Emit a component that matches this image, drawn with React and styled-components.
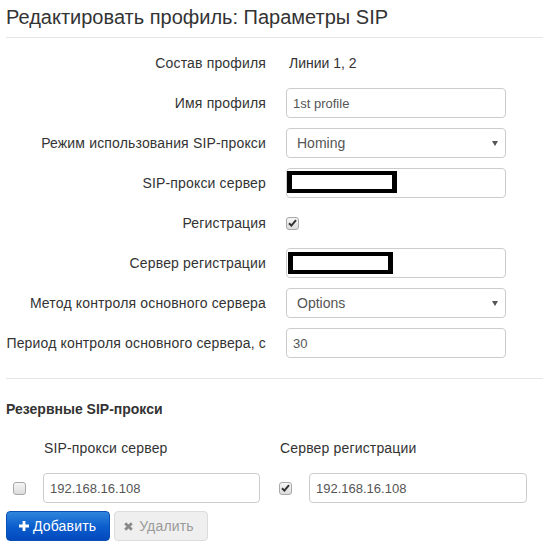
import React from "react";
import styled, { createGlobalStyle } from "styled-components";

const GlobalStyle = createGlobalStyle`
  body {
    margin: 0;
    background: #fff;
    font-family: "Liberation Sans", Arial, sans-serif;
    color: #333;
  }
`;

const Page = styled.div`
  padding: 6px 0 0 6px;
  width: 537px;
`;

const Title = styled.h3`
  margin: 0;
  font-size: 20px;
  line-height: 22px;
  font-weight: normal;
  color: #333;
`;

const Divider = styled.hr`
  margin: ${(p) => p.$top || 0}px 0 0 0;
  border: 0;
  border-top: 1px solid #e5e5e5;
  height: 0;
`;

const Form = styled.div`
  display: grid;
  grid-template-columns: 260px 220px;
  grid-auto-rows: 30px;
  column-gap: 20px;
  row-gap: 10px;
  margin-top: 10px;
`;

const Label = styled.div`
  align-self: center;
  text-align: right;
  font-size: 14px;
  letter-spacing: 0.16px;
  white-space: nowrap;
`;

const Static = styled.div`
  align-self: center;
  padding-left: 3px;
  font-size: 14px;
`;

const FieldWrap = styled.div`
  position: relative;
  display: flex;
  align-items: center;
`;

const Input = styled.input`
  box-sizing: border-box;
  width: 100%;
  height: 30px;
  padding: 0 6px;
  border: 1px solid #ccc;
  border-radius: 4px;
  font-family: inherit;
  font-size: 13px;
  color: #555;
  background: #fff;
  outline: none;
`;

const Select = styled.select`
  box-sizing: border-box;
  width: 100%;
  height: 30px;
  padding: 0 10px;
  border: 1px solid #ccc;
  border-radius: 4px;
  font-family: inherit;
  font-size: 14px;
  color: #555;
  background: #fff;
  appearance: none;
  -webkit-appearance: none;
  outline: none;
`;

const Caret = styled.svg`
  position: absolute;
  right: 8px;
  top: 13px;
  pointer-events: none;
`;

const Redacted = styled.div`
  position: absolute;
  left: ${(p) => p.$left}px;
  top: ${(p) => p.$top}px;
  width: ${(p) => p.$width}px;
  height: 22px;
  box-sizing: border-box;
  border-style: solid;
  border-color: #000;
  border-width: 4px 5px;
  background: #fff;
`;

const CheckBox = styled.span`
  box-sizing: border-box;
  display: inline-flex;
  align-items: center;
  justify-content: center;
  width: 13px;
  height: 13px;
  border: 1px solid #a8a8a8;
  border-radius: 3px;
  background: linear-gradient(to bottom, #f6f6f6, #dcdcdc);
`;

const Check = ({ checked }) => (
  <CheckBox>
    {checked && (
      <svg width="9" height="8" viewBox="0 0 9 8">
        <path d="M1 4.2 L3.4 6.6 L8 1.2" fill="none" stroke="#333" strokeWidth="2" />
      </svg>
    )}
  </CheckBox>
);

const SectionTitle = styled.div`
  margin-top: 21px;
  font-size: 14px;
  line-height: 18px;
  font-weight: bold;
  color: #333;
`;

const Backup = styled.div`
  display: grid;
  grid-template-columns: 37px 217px 19px 30px 218px;
  grid-template-rows: 20px 30px;
  row-gap: 15px;
  margin-top: 20px;
`;

const ColHead = styled.div`
  grid-column: ${(p) => p.$col};
  font-size: 14px;
  line-height: 20px;
  letter-spacing: 0.16px;
  white-space: nowrap;
  padding-left: 1px;
`;

const CheckCell = styled.div`
  grid-column: ${(p) => p.$col};
  display: flex;
  align-items: center;
  padding-left: ${(p) => p.$pad || 0}px;
`;

const Actions = styled.div`
  display: flex;
  gap: 4px;
  margin-top: 8px;
`;

const Button = styled.button`
  box-sizing: border-box;
  display: inline-flex;
  align-items: center;
  gap: ${(p) => (p.$primary ? 4 : 6)}px;
  height: 30px;
  padding: ${(p) => (p.$primary ? "0 13px 0 12px" : "0 13px 0 9px")};
  border-radius: 4px;
  font-family: inherit;
  font-size: 14px;
  letter-spacing: 0.16px;
  border: 1px solid ${(p) => (p.$primary ? "#0b4fb5" : "#dcdcdc")};
  color: ${(p) => (p.$primary ? "#fff" : "#9a9a9a")};
  background: ${(p) =>
    p.$primary
      ? "linear-gradient(to bottom, #2f86dc 0%, #0a5ccc 55%, #0349bd 100%)"
      : "#efefef"};
`;

export default function App() {
  return (
    <>
      <GlobalStyle />
      <Page>
        <Title>Редактировать профиль: Параметры SIP</Title>
        <Divider $top={9} />

        <Form>
          <Label>Состав профиля</Label>
          <Static>Линии 1, 2</Static>

          <Label>Имя профиля</Label>
          <FieldWrap>
            <Input defaultValue="1st profile" />
          </FieldWrap>

          <Label>Режим использования SIP-прокси</Label>
          <FieldWrap>
            <Select defaultValue="Homing">
              <option>Homing</option>
            </Select>
            <Caret width="6" height="5" viewBox="0 0 6 5">
              <path d="M0 0 H6 L3 5 Z" fill="#555" />
            </Caret>
          </FieldWrap>

          <Label>SIP-прокси сервер</Label>
          <FieldWrap>
            <Input defaultValue="" />
            <Redacted $left={1} $top={3} $width={110} />
          </FieldWrap>

          <Label>Регистрация</Label>
          <FieldWrap>
            <Check checked />
          </FieldWrap>

          <Label>Сервер регистрации</Label>
          <FieldWrap>
            <Input defaultValue="" />
            <Redacted $left={2} $top={4} $width={105} />
          </FieldWrap>

          <Label>Метод контроля основного сервера</Label>
          <FieldWrap>
            <Select defaultValue="Options">
              <option>Options</option>
            </Select>
            <Caret width="6" height="5" viewBox="0 0 6 5">
              <path d="M0 0 H6 L3 5 Z" fill="#555" />
            </Caret>
          </FieldWrap>

          <Label>Период контроля основного сервера, с</Label>
          <FieldWrap>
            <Input defaultValue="30" />
          </FieldWrap>
        </Form>

        <Divider $top={20} />

        <SectionTitle>Резервные SIP-прокси</SectionTitle>

        <Backup>
          <ColHead $col="2">SIP-прокси сервер</ColHead>
          <ColHead $col="4 / span 2">Сервер регистрации</ColHead>

          <CheckCell $col="1" $pad={7}>
            <Check />
          </CheckCell>
          <FieldWrap>
            <Input defaultValue="192.168.16.108" />
          </FieldWrap>
          <CheckCell $col="4">
            <Check checked />
          </CheckCell>
          <FieldWrap>
            <Input defaultValue="192.168.16.108" />
          </FieldWrap>
        </Backup>

        <Actions>
          <Button $primary>
            <svg width="10" height="10" viewBox="0 0 10 10">
              <path d="M3.6 0 H6.4 V3.6 H10 V6.4 H6.4 V10 H3.6 V6.4 H0 V3.6 H3.6 Z" fill="#fff" />
            </svg>
            Добавить
          </Button>
          <Button>
            <svg width="9" height="9" viewBox="0 0 9 9">
              <path d="M1.2 1.2 L7.8 7.8 M7.8 1.2 L1.2 7.8" stroke="#8a8a8a" strokeWidth="2.8" />
            </svg>
            Удалить
          </Button>
        </Actions>
      </Page>
    </>
  );
}
